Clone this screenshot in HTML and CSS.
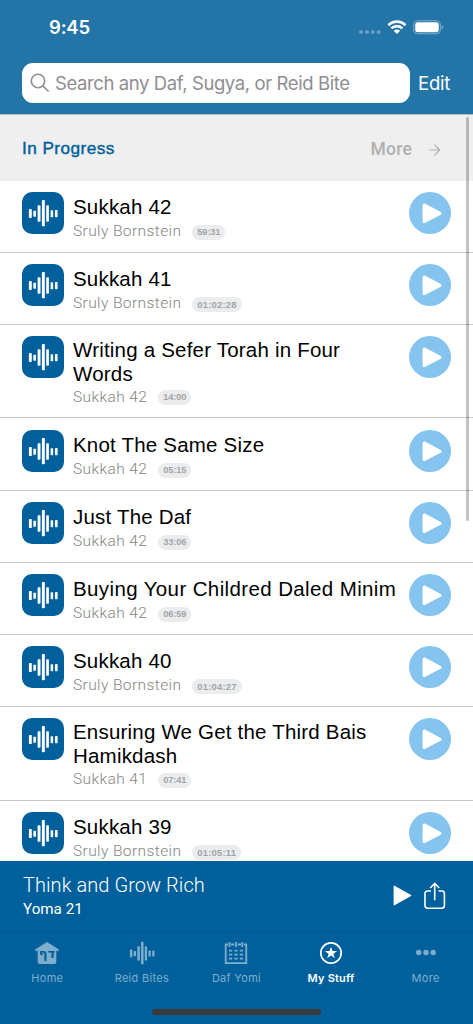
FILE: index.html
```
<!DOCTYPE html>
<html lang="en">
<head>
<meta charset="utf-8">
<title>My Stuff</title>
<link rel="stylesheet" href="styles.css">
</head>
<body>
<svg class="defs" width="0" height="0" aria-hidden="true">
  <symbol id="wave" viewBox="0 0 42 42"><g fill="currentColor"><rect x="6.9" y="17" width="2.9" height="9" rx=".7"/><rect x="11.3" y="18.7" width="2.7" height="6" rx=".7"/><rect x="15.6" y="13.2" width="2.9" height="16.6" rx=".7"/><rect x="19.9" y="8" width="2.9" height="26.2" rx=".7"/><rect x="24.2" y="13.2" width="2.7" height="16.6" rx=".7"/><rect x="28.6" y="18.2" width="2.6" height="7" rx=".7"/><rect x="33" y="18" width="2.6" height="7.2" rx=".7"/></g></symbol>
  <symbol id="play" viewBox="0 0 42 42"><circle cx="21" cy="21" r="21" fill="#84c4ee"/><path d="M15.2 13 31 21.3 15.2 29.5Z" fill="#fff" stroke="#fff" stroke-width="3.2" stroke-linejoin="round"/></symbol>
</svg>
<div class="screen">
  <header class="top">
    <div class="status">
      <span class="time">9:45</span>
      <svg class="indicators" width="86" height="16" viewBox="0 0 86 16">
        <g fill="#669fc3"><circle cx="3" cy="12" r="2.1"/><circle cx="9" cy="12" r="2.1"/><circle cx="14.8" cy="12" r="2.1"/><circle cx="20.6" cy="12" r="2.1"/></g>
        <g fill="none" stroke="#fff" stroke-width="2.7"><path d="M30.4 5.2a12 12 0 0 1 17 0"/><path d="M33.4 8.4a7.8 7.8 0 0 1 11 0"/></g>
        <path d="M35.7 10.8a4.6 4.6 0 0 1 6.4 0L38.9 14Z" fill="#fff"/>
        <rect x="55.7" y=".7" width="26.6" height="13" rx="4" fill="none" stroke="#7faccb" stroke-width="1.1"/><rect x="57.2" y="2.2" width="23.6" height="10" rx="2.6" fill="#fff"/><path d="M83.6 5v4.4q1.6-.7 1.6-2.2t-1.6-2.2Z" fill="#7faccb"/>
      </svg>
    </div>
    <div class="searchbar">
      <div class="field">
        <svg width="20" height="20" viewBox="0 0 20 20" fill="none" stroke="#8e8e93" stroke-width="1.6"><circle cx="8" cy="8" r="6.7"/><path d="m12.8 12.8 5.4 5.2" stroke-linecap="round"/></svg>
        <span class="placeholder">Search any Daf, Sugya, or Reid Bite</span>
      </div>
      <span class="edit">Edit</span>
    </div>
  </header>
  <main class="list">
    <div class="section"><h2>In Progress</h2><span class="more">More</span><svg class="arrow" width="13" height="14" viewBox="0 0 13 14" fill="none" stroke="#b0b0b0" stroke-width="1.2"><path d="M1 7h10.6M6.5 1.6 11.7 7l-5.2 5.4"/></svg></div>
    <article class="row"><svg class="tile"><use href="#wave"/></svg><div class="info"><h3>Sukkah 42</h3><p><span>Sruly Bornstein</span><b>59:31</b></p></div><svg class="play"><use href="#play"/></svg></article>
    <article class="row"><svg class="tile"><use href="#wave"/></svg><div class="info"><h3>Sukkah 41</h3><p><span>Sruly Bornstein</span><b class="long">01:02:28</b></p></div><svg class="play"><use href="#play"/></svg></article>
    <article class="row tall"><svg class="tile"><use href="#wave"/></svg><div class="info"><h3>Writing a Sefer Torah in Four<br>Words</h3><p><span>Sukkah 42</span><b>14:00</b></p></div><svg class="play"><use href="#play"/></svg></article>
    <article class="row"><svg class="tile"><use href="#wave"/></svg><div class="info"><h3>Knot The Same Size</h3><p><span>Sukkah 42</span><b>05:15</b></p></div><svg class="play"><use href="#play"/></svg></article>
    <article class="row"><svg class="tile"><use href="#wave"/></svg><div class="info"><h3>Just The Daf</h3><p><span>Sukkah 42</span><b>33:06</b></p></div><svg class="play"><use href="#play"/></svg></article>
    <article class="row"><svg class="tile"><use href="#wave"/></svg><div class="info"><h3 class="wide">Buying Your Childred Daled Minim</h3><p><span>Sukkah 42</span><b>06:59</b></p></div><svg class="play"><use href="#play"/></svg></article>
    <article class="row"><svg class="tile"><use href="#wave"/></svg><div class="info"><h3>Sukkah 40</h3><p><span>Sruly Bornstein</span><b class="long">01:04:27</b></p></div><svg class="play"><use href="#play"/></svg></article>
    <article class="row tall"><svg class="tile"><use href="#wave"/></svg><div class="info"><h3>Ensuring We Get the Third Bais<br>Hamikdash</h3><p><span>Sukkah 41</span><b>07:41</b></p></div><svg class="play"><use href="#play"/></svg></article>
    <article class="row"><svg class="tile"><use href="#wave"/></svg><div class="info"><h3>Sukkah 39</h3><p><span>Sruly Bornstein</span><b class="long">01:05:11</b></p></div><svg class="play"><use href="#play"/></svg></article>
    <div class="scrollbar"></div>
  </main>
  <section class="player">
    <div class="track"><div class="track-title">Think and Grow Rich</div><div class="track-sub">Yoma 21</div></div>
    <svg width="19" height="21" viewBox="0 0 19 21"><path d="M1.2 1.2v18.6L17.8 10.5Z" fill="#fff" stroke="#fff" stroke-width="1.2" stroke-linejoin="round"/></svg>
    <svg class="share" width="22" height="28" viewBox="0 0 22 28" fill="none" stroke="#fff" stroke-width="1.6"><path d="M7 9H3.600Q1 9 1 11.600v12Q1 26.200 3.600 26.200h14.200q2.600 0 2.600-2.600v-12Q20.400 9 17.800 9H14.500"/><path d="M10.700 18.200V1.600M6.200 6l4.500-4.500L15.200 6"/></svg>
  </section>
  <nav class="tabs">
    <div class="tab"><svg width="26" height="24" viewBox="0 0 26 24"><path d="M13 1 25 8.600 24 10.400 22.300 9.500V21q0 2-2 2H5.700q-2 0-2-2V9.500L2 10.400 1 8.600Z" fill="currentColor"/><text x="13" y="17" class="daf" text-anchor="middle">דף</text></svg><span>Home</span></div>
    <div class="tab"><svg width="30" height="24" viewBox="4 7 34 28"><use href="#wave" width="42" height="42"/></svg><span>Reid Bites</span></div>
    <div class="tab"><svg width="24" height="24" viewBox="0 0 24 24" fill="none" stroke="currentColor" stroke-width="1.8"><path d="M4 3.500H1.700v18.600h20.600V3.500H20M7 3.500h3M13.500 3.500h3.500M5.500 1v5M11.800 1v5M18.300 1v5"/><path d="M5 9.700h3.200m2.200 0h3.200m2.200 0h3.200M5 13.700h3.200m2.200 0h3.200m2.200 0h3.200M5 17.700h3.200m2.200 0h3.200m2.200 0h3.200"/></svg><span>Daf Yomi</span></div>
    <div class="tab active"><svg width="24" height="24" viewBox="0 0 24 24"><circle cx="12" cy="12" r="10.200" fill="none" stroke="currentColor" stroke-width="1.700"/><path d="m12 5.800 1.500 4.300h4.600l-3.700 2.800 1.400 4.400-3.800-2.700-3.800 2.700 1.400-4.400-3.700-2.800h4.600Z" fill="currentColor"/></svg><span>My Stuff</span></div>
    <div class="tab"><svg width="24" height="24" viewBox="0 0 24 24" fill="currentColor"><circle cx="4.700" cy="11.500" r="2.700"/><circle cx="12" cy="11.500" r="2.700"/><circle cx="19.200" cy="11.500" r="2.700"/></svg><span>More</span></div>
  </nav>
  <div class="home-area"><div class="home-indicator"></div></div>
</div>
</body>
</html>
```
FILE: styles.css
```
* { box-sizing: border-box; }
body { margin: 0; font-family: "Liberation Sans", Arial, sans-serif; }
h2, h3, p { margin: 0; font-weight: 400; }
svg { display: block; flex: none; }
.defs { position: absolute; }
.screen { width: 473px; height: 1024px; display: flex; flex-direction: column; overflow: hidden; background: #fff; white-space: nowrap; }
.top { height: 115px; flex: none; background: #2374a7; border-bottom: 1px solid #a9bcc8; font-family: Inter, sans-serif; color: #fff; }
.status { height: 63px; padding: 15px 30px 0 49px; display: flex; justify-content: space-between; }
.time { font-size: 18.5px; line-height: 24px; font-weight: 600; letter-spacing: -.2px; }
.indicators { margin: 5px -1px 0 0; overflow: visible; }
.searchbar { display: flex; padding-left: 22px; align-items: center; }
.field { width: 387.5px; height: 40px; border-radius: 11px; background: #fff; display: flex; align-items: center; padding-left: 8px; gap: 5px; }
.placeholder { color: #8e8e93; font-size: 18.5px; letter-spacing: -.4px; }
.edit { margin-left: 8.5px; font-size: 18.5px; letter-spacing: -.2px; }
.list { flex: 1; min-height: 0; overflow: hidden; position: relative; }
.section { height: 65.5px; background: #efefef; display: flex; align-items: center; padding: 1px 32px 0 22px; }
.section h2 { flex: 1; color: #005f9b; font-size: 17.2px; letter-spacing: .45px; -webkit-text-stroke: .4px #005f9b; }
.more { font-family: Roboto, sans-serif; font-weight: 500; font-size: 17.5px; letter-spacing: .2px; line-height: 20px; padding-top: 1px; color: #b0b0b0; margin-right: 16px; }
.arrow { margin-top: 3px; }
.row { height: 72.15px; display: flex; align-items: flex-start; padding: 11.2px 22px 0; border-bottom: 1px solid #c8c8ca; }
.row.tall { height: 93.7px; }
.tile { width: 42px; height: 42px; border-radius: 10px; background: #00609c; color: #fff; }
.info { flex: 1; padding: 3px 0 0 9px; }
.info h3 { font-size: 20.5px; line-height: 24px; letter-spacing: .2px; color: #000; }
.info h3.wide { letter-spacing: .38px; }
.tall .info { padding-top: 2px; }
.info p { display: flex; align-items: center; height: 22px; gap: 11px; margin-top: 1.4px; }
.tall .info p { margin-top: 0; }
.info p span { font: 300 15.5px/22px Roboto, sans-serif; letter-spacing: .4px; color: #858585; }
.info b { height: 15px; margin-top: 2px; border-radius: 8px; padding: 0 5px; background: #ebecee; color: #a2a4a6; font-size: 9.2px; line-height: 15px; letter-spacing: -.1px; }
.info b.long { font-size: 9.5px; letter-spacing: .15px; }
.play { width: 42px; height: 42px; }
.scrollbar { position: absolute; right: 4px; top: 2px; width: 3.5px; height: 404px; border-radius: 2px; background: rgba(0,0,0,.24); }
.player { height: 71px; flex: none; background: #00609c; border-bottom: 1px solid #00568f; color: #fff; display: flex; align-items: flex-start; padding: 24px 27px 0 23px; }
.track { flex: 1; margin-top: -13px; font-family: Roboto, sans-serif; }
.track-title { font-size: 20px; line-height: 27px; font-weight: 300; letter-spacing: .06px; }
.track-sub { font-size: 15.2px; line-height: 20px; }
.share { margin: -3px 0 0 12px; }
.tabs { height: 62px; flex: none; background: #00609c; display: flex; padding-top: 9px; }
.tab { flex: 1; display: flex; flex-direction: column; align-items: center; color: #7eaecc; }
.tab span { margin-top: 6px; font-size: 11px; line-height: 14px; letter-spacing: .3px; font-family: Inter, sans-serif; }
.tab.active { color: #fff; }
.tab.active span { font-weight: 600; letter-spacing: .2px; }
.daf { font: 700 13px "DejaVu Sans", sans-serif; fill: #00609c; }
.home-area { height: 30px; flex: none; background: #00609c; padding-top: 15px; }
.home-indicator { width: 169px; height: 6px; border-radius: 3px; background: #3a3a3c; margin: 0 auto; }
```
